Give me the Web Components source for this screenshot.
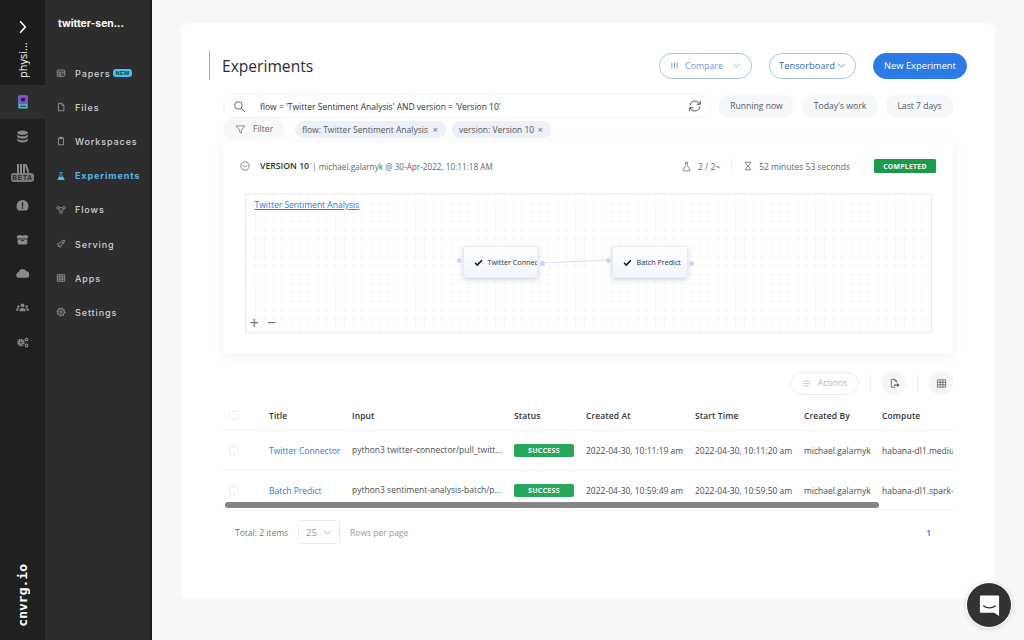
<!DOCTYPE html>
<html>
<head>
<meta charset="utf-8">
<title>Experiments</title>
<style>
  html, body { margin: 0; height: 640px; overflow: hidden; background: #f8f8f8; }
  body { font-family: "Open Sans", sans-serif; color: #333; }
</style>
</head>
<body>
<cn-app></cn-app>
<script>
const ICONS = {
  chevron: '<path d="M7 2l9 10-9 10" fill="none" stroke="currentColor" stroke-width="2.6"/>',
  book: '<rect x="4" y="1" width="16" height="22" rx="1.5" fill="#45c7c0"/><rect x="4" y="1" width="16" height="15" rx="1" fill="#7b4fd6"/><path d="M9 5h6v4l-3 3-3-3z" fill="#1c1c1c"/><rect x="7" y="18.500" width="10" height="1.600" fill="#1c1c1c"/>',
  db: '<g fill="currentColor"><ellipse cx="12" cy="5" rx="10" ry="4"/><path d="M2 8c1 2.600 5 3.700 10 3.700S21 10.600 22 8v4c0 2.200-4.500 4-10 4S2 14.200 2 12z"/><path d="M2 15c1 2.600 5 3.700 10 3.700s9-1.100 10-3.700v4c0 2.200-4.500 4-10 4S2 21.200 2 19z"/></g>',
  alert: '<path d="M12 2a11 11 0 0 1 11 11c0 3-1 6-3 8H4c-2-2-3-5-3-8A11 11 0 0 1 12 2z" fill="currentColor"/><rect x="10.700" y="6" width="2.600" height="8" fill="#202020"/><rect x="10.700" y="15.500" width="2.600" height="2.600" fill="#202020"/>',
  box: '<path d="M1 6l6-3 5 2 5-2 6 3-2 5v8l-2 2H5l-2-2v-8z" fill="currentColor"/><path d="M2 11h20M9.500 14h5" stroke="#202020" stroke-width="1.600"/>',
  cloud: '<path d="M6 20a5.500 5.500 0 0 1-1-10.900A7.500 7.500 0 0 1 19 8a6 6 0 0 1-.5 12z" fill="currentColor"/>',
  users: '<g fill="currentColor"><circle cx="12" cy="8" r="3.500"/><path d="M6 19c0-4 2.500-6 6-6s6 2 6 6z"/><circle cx="4.500" cy="10" r="2.300"/><path d="M0 18c0-3 1.500-5 4.500-5l1 .5C4.500 15 4 16.500 4 18z"/><circle cx="19.500" cy="10" r="2.300"/><path d="M24 18c0-3-1.500-5-4.500-5l-1 .5c1 1.500 1.500 3 1.500 4.500z"/></g>',
  gears: '<g fill="none" stroke="currentColor"><circle cx="9" cy="12" r="5" stroke-width="4" stroke-dasharray="2.800 1"/><circle cx="9" cy="12" r="3" stroke-width="2.400"/><circle cx="19.500" cy="6.500" r="2.500" stroke-width="2"/><circle cx="19.500" cy="17.500" r="2.500" stroke-width="2"/></g>',
  papers: '<g fill="none" stroke="currentColor" stroke-width="1.800"><rect x="3" y="5" width="18" height="15" rx="2"/><path d="M3 10h18M7 14h5v3H7zM15 14h3"/></g>',
  file: '<path d="M6 3h8l5 5v13H6zM14 3v5h5" fill="none" stroke="currentColor" stroke-width="1.800"/>',
  clipboard: '<path d="M6 5h12v16H6zM9 3h6v3H9z" fill="none" stroke="currentColor" stroke-width="1.800"/>',
  flask: '<path d="M9 3h6M10 3v7L4.500 20a1 1 0 0 0 1 1.500h13a1 1 0 0 0 1-1.500L14 10V3" fill="none" stroke="currentColor" stroke-width="1.800"/>',
  flaskSolid: '<path d="M8 3h8v2h-1v5l5.500 10a1 1 0 0 1-1 1.500h-15a1 1 0 0 1-1-1.500L9 10V5H8z" fill="currentColor"/><path d="M10.500 5h3v5.500l1.500 3H9l1.500-3z" fill="#2d2d2d"/>',
  flows: '<g fill="none" stroke="currentColor" stroke-width="1.700"><rect x="2" y="4" width="6" height="5" rx="2"/><rect x="16" y="4" width="6" height="5" rx="2"/><rect x="9" y="15" width="6" height="5" rx="2"/><path d="M8 6.500h8M6 9l4 6M18 9l-4 6"/></g>',
  rocket: '<path d="M21 3c-6 0-10 3-13 8l-5 1 3 3-1 3 3-1 3 3 1-5c5-3 8-7 9-12zM15 8h2v2h-2z" fill="none" stroke="currentColor" stroke-width="1.700"/>',
  grid: '<path d="M3 4h18v16H3zM3 9.300h18M3 14.700h18M9 4v16M15 4v16" fill="none" stroke="currentColor" stroke-width="1.600"/>',
  gear: '<g fill="none" stroke="currentColor"><circle cx="12" cy="12" r="3" stroke-width="1.700"/><circle cx="12" cy="12" r="8" stroke-width="1.800"/><circle cx="12" cy="12" r="9.500" stroke-width="2.400" stroke-dasharray="3 4.450"/></g>',
  search: '<circle cx="10" cy="10" r="7" fill="none" stroke="currentColor" stroke-width="1.500"/><path d="M15 15l7 7" stroke="currentColor" stroke-width="1.500"/>',
  refresh: '<g fill="none" stroke="currentColor" stroke-width="1.700"><path d="M3.500 11A8.500 8.500 0 0 1 18.500 6.500L21 9"/><path d="M21 3v6h-6"/><path d="M20.500 13A8.500 8.500 0 0 1 5.500 17.500L3 15"/><path d="M3 21v-6h6"/></g>',
  filter: '<path d="M2.500 4h19l-7.500 9v7l-4-2.500V13z" fill="none" stroke="currentColor" stroke-width="1.500"/>',
  down: '<path d="M3 8l9 8 9-8" fill="none" stroke="currentColor" stroke-width="1.800"/>',
  circleDown: '<circle cx="12" cy="12" r="10" fill="none" stroke="currentColor" stroke-width="1.700"/><path d="M7 10l5 5 5-5" fill="none" stroke="currentColor" stroke-width="1.700"/>',
  bars: '<path d="M5 4v16M12 4v16M19 4v16" stroke="currentColor" stroke-width="2.400"/>',
  hourglass: '<path d="M5 3h14M5 21h14M7 3v4l5 5 5-5V3M7 21v-4l5-5 5 5v4" fill="none" stroke="currentColor" stroke-width="1.800"/>',
  check: '<path d="M3 13l6 6L21 6" fill="none" stroke="currentColor" stroke-width="4"/>',
  menu: '<path d="M3 6h18M3 12h18M3 18h18" stroke="currentColor" stroke-width="1.800"/>',
  exportFile: '<path d="M14 20H5V3h8l4 4v3M13 3v4h4" fill="none" stroke="currentColor" stroke-width="1.800"/><path d="M11 14h7v-3l5 4.500-5 4.500v-3h-7z" fill="currentColor"/>'
};
const icon = (name, size) => `<svg width="${size}" height="${size}" viewBox="0 0 24 24" style="display:block;flex:none">${ICONS[name]}</svg>`;

class CnRail extends HTMLElement {
  connectedCallback() {
    const slot = (name) => `<div class="slot">${icon(name, 13)}</div>`;
    this.attachShadow({ mode: 'open' }).innerHTML = `
      <style>
        :host { display: flex; flex-direction: column; align-items: stretch; width: 45px; flex: none; background: #202020; color: #8a8a8a; height: 640px; }
        .top { height: 85px; color: #fff; display: flex; flex-direction: column; align-items: center; padding-top: 20px; box-sizing: border-box; background: #1d1d1d; }
        .name { writing-mode: vertical-rl; transform: rotate(180deg); font: 400 11px "Open Sans", sans-serif; margin-top: 9px; height: 35px; text-align: left; color: #f4f4f4; }
        .active { height: 34px; background: #2d2d2d; display: flex; align-items: center; justify-content: center; }
        .slot { height: 34.200px; display: flex; align-items: center; justify-content: center; }
        .beta { height: 35px; padding-top: 5px; box-sizing: border-box; display: flex; flex-direction: column; align-items: center; justify-content: center; }
        .beta span { display: block; background: #7d7d7d; color: #2a2a2a; font: 700 6.500px "Liberation Sans", sans-serif; letter-spacing: .8px; padding: 1px 0; border-radius: 3px; line-height: 7.500px; width: 23px; text-align: center; }
        .books { display: flex; gap: 1px; align-items: flex-end; height: 9px; }
        .books i { display: block; width: 2.200px; height: 9px; background: #8a8a8a; }
        .logo { margin-top: auto; margin-bottom: 13px; align-self: center; writing-mode: vertical-rl; transform: rotate(180deg); font: 700 13px "DejaVu Sans Mono", monospace; color: #fff; }
      </style>
      <div class="top">${icon('chevron', 14)}<div class="name">physi...</div></div>
      <div class="active">${icon('book', 14)}</div>
      ${slot('db')}
      <div class="beta"><div class="books"><i></i><i></i><i></i><i style="transform:rotate(-18deg)"></i></div><span>BETA</span></div>
      ${slot('alert')}${slot('box')}${slot('cloud')}${slot('users')}${slot('gears')}
      <div class="logo">cnvrg.io</div>`;
  }
}
customElements.define('cn-rail', CnRail);

class CnNavItem extends HTMLElement {
  connectedCallback() {
    const isActive = this.hasAttribute('active');
    this.attachShadow({ mode: 'open' }).innerHTML = `
      <style>
        :host { display: flex; align-items: center; height: 34.200px; color: #d0d0d0; font: 500 9px Inter, sans-serif; letter-spacing: .9px; }
        :host([active]) { color: #58b7e6; font-weight: 700; }
        .ic { width: 30px; padding-left: 11px; box-sizing: border-box; color: ${isActive ? '#58b7e6' : '#a9a9a9'}; flex: none; }
        ::slotted(b) { background: #3cc6f2; color: #2d2d2d; font: 700 5.800px "Liberation Sans", sans-serif; letter-spacing: .3px; border-radius: 3px; padding: 1px 2px; margin-left: 3px; line-height: 6.500px; }
      </style>
      <div class="ic">${icon(this.getAttribute('icon'), 10)}</div><span>${this.getAttribute('label')}</span><slot></slot>`;
  }
}
customElements.define('cn-nav-item', CnNavItem);

class CnNav extends HTMLElement {
  connectedCallback() {
    this.attachShadow({ mode: 'open' }).innerHTML = `
      <style>
        :host { display: block; width: 105px; flex: none; background: #2d2d2d; border-right: 2px solid #1b1b1b; height: 640px; box-sizing: content-box; }
        .title { font: 700 10.300px Inter, sans-serif; color: #fff; padding: 16px 0 0 13px; height: 40px; line-height: 14px; }
      </style>
      <div class="title">twitter-sen...</div>
      <slot></slot>`;
  }
}
customElements.define('cn-nav', CnNav);

class CnButton extends HTMLElement {
  connectedCallback() {
    this.attachShadow({ mode: 'open' }).innerHTML = `
      <style>
        :host { display: inline-flex; align-items: center; justify-content: center; gap: 6px; height: 26px; box-sizing: border-box; border-radius: 13px; border: 1px solid #a9c3ea; color: #2f66b5; font: 400 9.300px "Open Sans", sans-serif; background: #fff; white-space: nowrap; }
        :host([variant=primary]) { background: #2a7be8; border-color: #2a7be8; color: #fff; font-size: 9.300px; }
        :host([variant=muted]) { color: #6c9ad8; font-size: 8.800px; }
      </style>
      <slot></slot>`;
  }
}
customElements.define('cn-button', CnButton);

class CnHeader extends HTMLElement {
  connectedCallback() {
    this.attachShadow({ mode: 'open' }).innerHTML = `
      <style>
        :host { display: flex; align-items: center; height: 29px; border-left: 1px solid #5cc3f2; padding-left: 12px; margin-bottom: 14px; }
        h1 { font: 400 15.600px "Open Sans", sans-serif; color: #2c2c2c; margin: 0; flex: 1; }
        .btns { display: flex; gap: 17px; }
      </style>
      <h1>Experiments</h1>
      <div class="btns">
        <cn-button variant="muted" style="width:93px">${icon('bars', 9)}Compare<span style="margin-left:3px">${icon('down', 9)}</span></cn-button>
        <cn-button style="width:87px;gap:2px">Tensorboard${icon('down', 9)}</cn-button>
        <cn-button variant="primary" style="width:94px">New Experiment</cn-button>
      </div>`;
  }
}
customElements.define('cn-header', CnHeader);

class CnSearch extends HTMLElement {
  connectedCallback() {
    this.attachShadow({ mode: 'open' }).innerHTML = `
      <style>
        :host { display: block; margin-left: 14px; font: 400 8.600px "Open Sans", sans-serif; color: #4a4a4a; }
        .row { display: flex; align-items: center; height: 24px; }
        .box { width: 488px; height: 24px; box-sizing: border-box; border: 1px solid #f3f3f5; border-radius: 12px; display: flex; align-items: center; padding: 0 8px 0 9px; margin-right: 8px; }
        .box span { flex: 1; margin-left: 14px; color: #333; white-space: nowrap; font-size: 8.500px; }
        .sg { height: 24px; border-radius: 12px; background: #f6f8fc; display: flex; align-items: center; justify-content: center; margin-right: 8.500px; color: #555; }
        .filters { display: flex; align-items: center; height: 22px; margin-bottom: 1px; }
        .filter { width: 61px; height: 22px; background: #f8f8f8; border-radius: 11px; display: flex; align-items: center; gap: 7px; padding-left: 12px; box-sizing: border-box; margin-right: 11px; color: #666; }
        .chip { height: 17px; border-radius: 9px; background: #ecf1f9; display: flex; align-items: center; padding: 0 8px 0 7px; margin-right: 6px; color: #555; white-space: nowrap; box-sizing: border-box; justify-content: space-between; font-size: 8.500px; }
        .chip i { font-style: normal; font-size: 9px; color: #666; }
      </style>
      <div class="row">
        <div class="box">${icon('search', 13)}<span>flow = 'Twitter Sentiment Analysis' AND version = 'Version 10'</span><div style="color:#555">${icon('refresh', 14)}</div></div>
        <div class="sg" style="width:75px">Running now</div>
        <div class="sg" style="width:75px">Today's work</div>
        <div class="sg" style="width:67px;margin-right:0">Last 7 days</div>
      </div>
      <div class="filters">
        <div class="filter">${icon('filter', 11)}Filter</div>
        <div class="chip" style="width:151px">flow: Twitter Sentiment Analysis<i>×</i></div>
        <div class="chip" style="width:99px">version: Version 10<i>×</i></div>
      </div>`;
  }
}
customElements.define('cn-search', CnSearch);

class CnNode extends HTMLElement {
  connectedCallback() {
    this.attachShadow({ mode: 'open' }).innerHTML = `
      <style>
        :host { position: absolute; display: flex; align-items: center; height: 32px; box-sizing: border-box; border: 1px solid #e4ebf6; border-radius: 3px; background: linear-gradient(#fff, #f1f5fc); box-shadow: 0 2px 4px rgba(90,110,150,.28); font: 400 7.200px "Open Sans", sans-serif; color: #333; padding-left: 10px; gap: 5px; overflow: hidden; white-space: nowrap; }
        span { color: #111; }
      </style>
      <span>${icon('check', 9)}</span><slot></slot>`;
  }
}
customElements.define('cn-node', CnNode);

class CnGraph extends HTMLElement {
  connectedCallback() {
    this.attachShadow({ mode: 'open' }).innerHTML = `
      <style>
        :host { display: block; position: relative; height: 140px; box-sizing: border-box; border: 1.500px solid #ececec; margin: 0 21.500px 0 21.500px;
          background-color: #fff;
          background-image: radial-gradient(circle at .6px .6px, #f3f3f3 .9px, transparent 1.200px), linear-gradient(#fbfbfb 1px, transparent 1px), linear-gradient(90deg, #fbfbfb 1px, transparent 1px);
          background-size: 8.900px 8.900px; }
        a { position: absolute; left: 9px; top: 5px; font: 400 8.500px "Open Sans", sans-serif; color: #2a7be8; text-decoration: underline; }
        .port { position: absolute; width: 5px; height: 5px; border-radius: 50%; background: #c8d8f2; }
        svg.edge { position: absolute; left: 0; top: 0; }
        .zoom { position: absolute; left: 4px; bottom: 2px; display: flex; gap: 8px; color: #777; font: 400 16px "Liberation Sans", sans-serif; line-height: 15px; }
      </style>
      <a>Twitter Sentiment Analysis</a>
      <svg class="edge" width="684" height="137"><path d="M296 69L362 66" stroke="#d6e2f4" stroke-width="1"/></svg>
      <cn-node style="left:217px;top:52px;width:75px;padding-right:0"><span style="color:#333">Twitter Connec</span></cn-node>
      <cn-node style="left:366px;top:52px;width:76px">Batch Predict</cn-node>
      <div class="port" style="left:211px;top:64px"></div>
      <div class="port" style="left:294px;top:67px"></div>
      <div class="port" style="left:360px;top:64px"></div>
      <div class="port" style="left:443px;top:67px"></div>
      <div class="zoom"><span>+</span><span>−</span></div>`;
  }
}
customElements.define('cn-graph', CnGraph);

class CnVersionPanel extends HTMLElement {
  connectedCallback() {
    this.attachShadow({ mode: 'open' }).innerHTML = `
      <style>
        :host { display: block; margin-left: 14px; height: 213px; background: #fff; box-shadow: 0 2px 10px rgba(0,0,0,.06); font: 400 8.500px "Open Sans", sans-serif; color: #666; }
        .head { display: flex; align-items: center; height: 50px; margin-bottom: 2px; padding: 0 17px 0 17px; white-space: nowrap; }
        .head b { color: #333; font-weight: 600; margin: 0 3px 0 10px; font-size: 8.700px; }
        .meta { font-size: 8.200px; }
        .right { margin-left: auto; display: flex; align-items: center; }
        .badge { background: #1b9a4b; color: #fff; font: 700 6.800px "Open Sans", sans-serif; letter-spacing: .3px; height: 14px; width: 62px; display: flex; align-items: center; justify-content: center; border-radius: 1.500px; }
        .sep { width: 1px; height: 14px; background: #f3f3f3; margin: 0 11px 0 12px; }
        .stat { display: flex; align-items: center; gap: 6px; }
      </style>
      <div class="head">
        <span style="color:#555">${icon('circleDown', 10)}</span>
        <b>VERSION 10</b><span class="meta">| michael.galarnyk @ 30-Apr-2022, 10:11:18 AM</span>
        <div class="right">
          <div class="stat"><span style="color:#777">${icon('flask', 11)}</span>2 / 2~</div>
          <div class="sep" style="margin-left:11px"></div>
          <div class="stat"><span style="color:#666">${icon('hourglass', 10)}</span>52 minutes 53 seconds</div>
          <div class="sep"></div>
          <div class="badge">COMPLETED</div>
        </div>
      </div>
      <cn-graph></cn-graph>`;
  }
}
customElements.define('cn-version-panel', CnVersionPanel);

class CnToolbar extends HTMLElement {
  connectedCallback() {
    this.attachShadow({ mode: 'open' }).innerHTML = `
      <style>
        :host { display: flex; align-items: center; justify-content: flex-end; height: 24px; margin-top: 17px; color: #777; font: 400 8.600px "Open Sans", sans-serif; }
        .act { width: 69px; height: 23px; box-sizing: border-box; border: 1px solid #ececec; border-radius: 12px; display: flex; align-items: center; justify-content: center; gap: 7px; color: #b9b9b9; }
        .sep { width: 1px; height: 17px; background: #ececec; margin: 0 11px; }
        .c { width: 24px; height: 24px; border-radius: 50%; background: #f6f6f6; display: flex; align-items: center; justify-content: center; color: #555; }
      </style>
      <div class="act">${icon('menu', 9)}Actions</div>
      <div class="sep"></div>
      <div class="c">${icon('exportFile', 11)}</div>
      <div class="sep"></div>
      <div class="c">${icon('grid', 11)}</div>`;
  }
}
customElements.define('cn-toolbar', CnToolbar);

class CnTable extends HTMLElement {
  connectedCallback() {
    const rows = [
      ['Twitter Connector', 'python3 twitter-connector/pull_twitt...', '2022-04-30, 10:11:19 am', '2022-04-30, 10:11:20 am', 'habana-dl1.medium'],
      ['Batch Predict', 'python3 sentiment-analysis-batch/p...', '2022-04-30, 10:59:49 am', '2022-04-30, 10:59:50 am', 'habana-dl1.spark-worker']
    ];
    const heads = ['Title', 'Input', 'Status', 'Created At', 'Start Time', 'Created By', 'Compute'];
    this.attachShadow({ mode: 'open' }).innerHTML = `
      <style>
        :host { display: block; position: relative; margin: 6px 0 0 14px; overflow: hidden; font: 400 8.500px "Open Sans", sans-serif; color: #4c4c4c; }
        .r { display: grid; grid-template-columns: 46px 83px 162px 72px 109px 109px 78px 200px; width: 859px; white-space: nowrap; align-items: center; border-bottom: 1px solid #f2f2f2; height: 40px; box-sizing: border-box; }
        .r.h { height: 30px; padding-bottom: 1px; color: #333; font-weight: 600; letter-spacing: .1px; }
        .r > div { overflow: hidden; }
        .cb { width: 7px; height: 7px; border: 1px solid #e5ebf5; border-radius: 1.500px; margin-left: 6px; }
        .t { color: #2a7be8; }
        .inp { margin-top: -3px; }
        .ok { width: 60px; height: 13px; background: #25a85c; border-radius: 2px; color: #fff; font: 700 7px "Open Sans", sans-serif; letter-spacing: .3px; display: flex; align-items: center; justify-content: center; }
        .bar { position: absolute; left: 2px; top: 101px; width: 654px; height: 6px; border-radius: 3px; background: #858585; }
      </style>
      <div class="r h"><div><div class="cb"></div></div>${heads.map(h => `<div>${h}</div>`).join('')}</div>
      ${rows.map(r => `<div class="r">
        <div><div class="cb"></div></div>
        <div class="t">${r[0]}</div>
        <div class="inp">${r[1]}</div>
        <div><div class="ok">SUCCESS</div></div>
        <div>${r[2]}</div><div>${r[3]}</div>
        <div>michael.galarnyk</div><div>${r[4]}</div>
      </div>`).join('')}
      <div class="bar"></div>`;
  }
}
customElements.define('cn-table', CnTable);

class CnPager extends HTMLElement {
  connectedCallback() {
    this.attachShadow({ mode: 'open' }).innerHTML = `
      <style>
        :host { display: flex; align-items: center; height: 24px; margin: 9px 0 0 26px; font: 400 8.500px "Open Sans", sans-serif; color: #777; }
        .sel { width: 42px; height: 24px; box-sizing: border-box; border: 1px solid #e4eaf5; border-radius: 3px; margin: 0 10px 0 10px; display: flex; align-items: center; justify-content: space-between; padding: 0 7px; color: #999; font-size: 9.500px; }
        .rp { color: #999; }
        .pg { margin-left: auto; color: #2a7be8; margin-right: 22px; font-weight: 600; }
      </style>
      <span>Total: 2 items</span>
      <div class="sel">25${icon('down', 9)}</div>
      <span class="rp">Rows per page</span>
      <span class="pg">1</span>`;
  }
}
customElements.define('cn-pager', CnPager);

class CnChat extends HTMLElement {
  connectedCallback() {
    this.attachShadow({ mode: 'open' }).innerHTML = `
      <style>
        :host { position: absolute; left: 967px; top: 583px; width: 44px; height: 44px; border-radius: 50%; background: #333; box-shadow: 0 0 0 1px #fff, 0 1px 6px rgba(0,0,0,.2); display: flex; align-items: center; justify-content: center; }
      </style>
      <svg width="23" height="23" viewBox="0 0 24 24"><path d="M3 1.500h18a1 1 0 0 1 1 1V23l-5-3.500H3a1 1 0 0 1-1-1v-16a1 1 0 0 1 1-1z" fill="#fff"/><path d="M6 12.500c3 2.600 9 2.600 12 0" fill="none" stroke="#333" stroke-width="1.500" stroke-linecap="round"/></svg>`;
  }
}
customElements.define('cn-chat', CnChat);

class CnApp extends HTMLElement {
  connectedCallback() {
    const nav = [['papers', 'Papers'], ['file', 'Files'], ['clipboard', 'Workspaces'], ['flaskSolid', 'Experiments'], ['flows', 'Flows'], ['rocket', 'Serving'], ['grid', 'Apps'], ['gear', 'Settings']];
    this.attachShadow({ mode: 'open' }).innerHTML = `
      <style>
        :host { display: flex; width: 1024px; height: 640px; overflow: hidden; position: relative; background: #f8f8f8; }
        main { flex: 1; padding: 23px 29px 41px; min-width: 0; }
        .card { height: 576px; background: #fff; border-radius: 8px; padding: 28px 28px 0; box-sizing: border-box; overflow: hidden; }
        .inner { margin-right: 14px; }
      </style>
      <cn-rail></cn-rail>
      <cn-nav>
        ${nav.map(([i, l]) => `<cn-nav-item icon="${i}" label="${l}"${l === 'Experiments' ? ' active' : ''}>${l === 'Papers' ? '<b>NEW</b>' : ''}</cn-nav-item>`).join('')}
      </cn-nav>
      <main><div class="card">
        <cn-header></cn-header>
        <div class="inner">
          <cn-search></cn-search>
          <cn-version-panel></cn-version-panel>
          <cn-toolbar></cn-toolbar>
          <cn-table></cn-table>
          <cn-pager></cn-pager>
        </div>
      </div></main>
      <cn-chat></cn-chat>`;
  }
}
customElements.define('cn-app', CnApp);
</script>
</body>
</html>
